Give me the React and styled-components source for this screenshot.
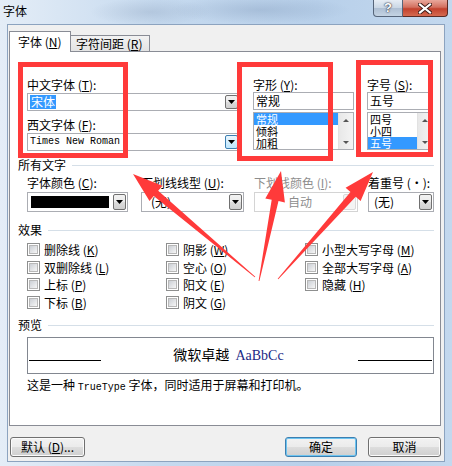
import React from 'react';
import styled, { createGlobalStyle } from 'styled-components';

const GlobalStyle = createGlobalStyle`
  html, body { margin: 0; padding: 0; background: #fff; }
  body {
    font-family: "Noto Sans CJK SC", "Liberation Sans", sans-serif;
    font-size: 12px;
    color: #000;
  }
`;

const RED = '#ff3a3a';

// annotation arrows: tail -> tip
const arrows = [
  { tail: [255, 277], tip: [133, 174] },
  { tail: [259, 281], tip: [281, 171] },
  { tail: [278, 279], tip: [373, 172] },
];

const arrowPoints = ({ tail, tip }) => {
  const dx = tip[0] - tail[0];
  const dy = tip[1] - tail[1];
  const len = Math.hypot(dx, dy);
  const ux = dx / len, uy = dy / len;
  const nx = -uy, ny = ux;
  const head = 30, headHalf = 10, neckHalf = 3.5, tailHalf = 0.4;
  const neck = [tip[0] - ux * head, tip[1] - uy * head];
  const p = (b, w) => `${(b[0] + nx * w).toFixed(1)},${(b[1] + ny * w).toFixed(1)}`;
  return [
    p(tail, tailHalf), p(neck, neckHalf), p(neck, headHalf),
    `${tip[0]},${tip[1]}`,
    p(neck, -headHalf), p(neck, -neckHalf), p(tail, -tailHalf),
  ].join(' ');
};

const App = () => (
  <>
    <GlobalStyle />
    <Window>
      <TitleBar>
        <Title>字体</Title>
        <Caption>
          <HelpButton>?</HelpButton>
          <CloseButton>
            <svg width="14" height="11" viewBox="0 0 14 11">
              <path d="M2 1.5 L12 9.5 M12 1.5 L2 9.5" stroke="#3a1a16" strokeWidth="4" strokeLinecap="square" />
              <path d="M2 1.5 L12 9.5 M12 1.5 L2 9.5" stroke="#fff" strokeWidth="2.2" strokeLinecap="square" />
            </svg>
          </CloseButton>
        </Caption>
      </TitleBar>

      <Client>
        <Tabs>
          <Tab $active>字体 (<u>N</u>)</Tab>
          <Tab>字符间距 (<u>R</u>)</Tab>
        </Tabs>

        <Panel>
          <FontGrid>
            <Column>
              <Label>中文字体 (<u>T</u>):</Label>
              <Combo $top={1}>
                <ComboText><Selected>宋体</Selected></ComboText>
                <DropButton $inset><DownTriangle /></DropButton>
              </Combo>
              <Label $top={7}>西文字体 (<u>F</u>):</Label>
              <Combo $top={1}>
                <ComboText><Mono>Times New Roman</Mono></ComboText>
                <DropButton $inset $hot><DownTriangle /></DropButton>
              </Combo>
            </Column>

            <Column>
              <Label>字形 (<u>Y</u>):</Label>
              <TextBox>常规</TextBox>
              <ListBox>
                <ListItems>
                  <ListItem $selected>常规</ListItem>
                  <ListItem>倾斜</ListItem>
                  <ListItem>加粗</ListItem>
                </ListItems>
                <ScrollBar>
                  <ScrollArrow $up />
                  <ScrollArrow />
                </ScrollBar>
              </ListBox>
            </Column>

            <Column>
              <Label>字号 (<u>S</u>):</Label>
              <TextBox>五号</TextBox>
              <ListBox>
                <ListItems>
                  <ListItem>四号</ListItem>
                  <ListItem>小四</ListItem>
                  <ListItem $selected>五号</ListItem>
                </ListItems>
                <ScrollBar>
                  <ScrollArrow $up />
                  <ScrollArrow />
                </ScrollBar>
              </ListBox>
            </Column>
          </FontGrid>

          <SectionHeader $top={7}><span>所有文字</span><Rule /></SectionHeader>

          <FieldGrid>
            <Column>
              <Label>字体颜色 (<u>C</u>):</Label>
              <Combo $top={2} $width={101} $height={20}>
                <ColorSwatch />
                <DropButton><DownTriangle /></DropButton>
              </Combo>
            </Column>
            <Column>
              <Label>下划线线型 (<u>U</u>):</Label>
              <Combo $top={2} $width={103} $height={20}>
                <ComboText $pad={8}>(无)</ComboText>
                <DropButton $inset><DownTriangle /></DropButton>
              </Combo>
            </Column>
            <Column>
              <Label $disabled>下划线颜色 (<u>I</u>):</Label>
              <Combo $top={2} $width={104} $height={20} $disabled>
                <ComboText $center $disabled>自动</ComboText>
                <DropButton $inset $disabled />
              </Combo>
            </Column>
            <Column>
              <Label>着重号 (·):</Label>
              <Combo $top={2} $width={66} $height={20}>
                <ComboText $pad={4}>(无)</ComboText>
                <DropButton $inset><DownTriangle /></DropButton>
              </Combo>
            </Column>
          </FieldGrid>

          <SectionHeader $top={11}><span>效果</span><Rule /></SectionHeader>

          <CheckGrid>
            <Check>删除线 (<u>K</u>)</Check>
            <Check>阴影 (<u>W</u>)</Check>
            <Check>小型大写字母 (<u>M</u>)</Check>
            <Check>双删除线 (<u>L</u>)</Check>
            <Check>空心 (<u>O</u>)</Check>
            <Check>全部大写字母 (<u>A</u>)</Check>
            <Check>上标 (<u>P</u>)</Check>
            <Check>阳文 (<u>E</u>)</Check>
            <Check>隐藏 (<u>H</u>)</Check>
            <Check>下标 (<u>B</u>)</Check>
            <Check>阴文 (<u>G</u>)</Check>
          </CheckGrid>

          <SectionHeader $top={7}><span>预览</span><Rule /></SectionHeader>

          <Preview>
            <PreviewLine />
            <PreviewText>微软卓越 <Sample>AaBbCc</Sample></PreviewText>
            <PreviewLine />
          </Preview>

          <Description>
            这是一种 <Mono>TrueType</Mono> 字体，同时适用于屏幕和打印机。
          </Description>
        </Panel>

        <ButtonRow>
          <Button $width={75}>默认 (<u>D</u>)...</Button>
          <Spacer />
          <Button $width={72} $default>确定</Button>
          <Button $width={73}>取消</Button>
        </ButtonRow>
      </Client>

      <Annotations width="452" height="466" viewBox="0 0 452 466">
        <rect x="20.5" y="64.5" width="105" height="91" fill="none" stroke={RED} strokeWidth="5" />
        <rect x="239.5" y="64.5" width="91" height="94" fill="none" stroke={RED} strokeWidth="5" />
        <rect x="358.5" y="62.5" width="72" height="92" fill="none" stroke={RED} strokeWidth="5" />
        {arrows.map((a, i) => (
          <polygon key={i} points={arrowPoints(a)} fill={RED} />
        ))}
      </Annotations>
    </Window>
  </>
);

const DownTriangle = () => (
  <svg width="7" height="4" viewBox="0 0 7 4">
    <polygon points="0,0 7,0 3.5,4" fill="#000" />
  </svg>
);

const Check = ({ children }) => (
  <CheckRow>
    <CheckBox />
    <span>{children}</span>
  </CheckRow>
);

export default App;

const Window = styled.div`
  position: relative;
  width: 452px;
  height: 466px;
  display: flex;
  flex-direction: column;
  overflow: hidden;
  background:
    radial-gradient(ellipse 60px 14px at 150px 12px, rgba(120, 140, 170, 0.25), transparent),
    radial-gradient(ellipse 90px 14px at 260px 10px, rgba(110, 135, 170, 0.28), transparent),
    linear-gradient(90deg, #e4edf7 0%, #c6daef 35%, #b8d0ea 70%, #c3d8ee 100%);
`;

const TitleBar = styled.div`
  height: 24px;
  display: flex;
  justify-content: space-between;
  align-items: flex-start;
  padding-left: 3px;
  flex-shrink: 0;
`;

const Title = styled.div`
  line-height: 22px;
  font-size: 12px;
  color: #000;
`;

const Caption = styled.div`
  display: flex;
  margin-right: 4px;
`;

const HelpButton = styled.div`
  width: 28px;
  height: 16px;
  border: 1px solid #56657a;
  border-top: none;
  border-radius: 0 0 0 4px;
  background: linear-gradient(#e6edf5 0%, #c9d6e4 50%, #aebfd3 51%, #c4d3e3 100%);
  color: #fff;
  font: bold 13px "Liberation Sans", sans-serif;
  line-height: 15px;
  text-align: center;
  text-shadow: 0 0 2px #223, 0 0 1px #223;
`;

const CloseButton = styled.div`
  width: 44px;
  height: 16px;
  border: 1px solid #5a2a24;
  border-top: none;
  border-left: none;
  border-radius: 0 0 4px 0;
  background: linear-gradient(#e9a89c 0%, #d3705f 45%, #c2412d 55%, #d56a50 100%);
  display: flex;
  align-items: center;
  justify-content: center;
`;

const Client = styled.div`
  flex: 1;
  margin: 0 7px 4px 7px;
  border: 1px solid #8ca3bf;
  background: #f0f0f0;
  padding: 7px 3px 4px 1px;
  display: flex;
  flex-direction: column;
`;

const Tabs = styled.div`
  display: flex;
  align-items: flex-end;
  height: 20px;
  margin-bottom: -1px;
  position: relative;
  z-index: 1;
`;

const Tab = styled.div`
  box-sizing: border-box;
  height: ${({ $active }) => ($active ? 21 : 17)}px;
  width: ${({ $active }) => ($active ? 62 : 79)}px;
  border: 1px solid #898c95;
  border-bottom: ${({ $active }) => ($active ? 'none' : '1px solid #898c95')};
  border-left: ${({ $active }) => ($active ? '1px solid #898c95' : 'none')};
  background: ${({ $active }) => ($active ? '#fff' : 'linear-gradient(#f2f2f2, #e3e3e3)')};
  padding-left: ${({ $active }) => ($active ? 8 : 5)}px;
  line-height: ${({ $active }) => ($active ? 19 : 15)}px;
  white-space: nowrap;
  u { text-decoration: underline; }
`;

const Panel = styled.div`
  box-sizing: border-box;
  height: 375px;
  border: 1px solid #898c95;
  background: #fff;
  padding: 26px 6px 0 8px;
  display: flex;
  flex-direction: column;
`;

const FontGrid = styled.div`
  margin-left: 9px;
  display: grid;
  grid-template-columns: 213px 101px 66px;
  column-gap: 13px;
  height: 73px;
`;

const Column = styled.div`
  display: flex;
  flex-direction: column;
`;

const Label = styled.div`
  line-height: 14px;
  height: 14px;
  margin-top: ${({ $top }) => $top || 0}px;
  color: ${({ $disabled }) => ($disabled ? '#8d8d8d' : '#000')};
  white-space: nowrap;
`;

const Combo = styled.div`
  box-sizing: border-box;
  display: flex;
  align-items: stretch;
  margin-top: ${({ $top }) => $top || 0}px;
  width: ${({ $width }) => ($width ? `${$width}px` : '100%')};
  height: ${({ $height }) => $height || 18}px;
  border: 1px solid ${({ $disabled }) => ($disabled ? '#d4d4d4' : '#abadb3')};
  background: #fff;
  padding: 1px;
`;

const ComboText = styled.div`
  flex: 1;
  display: flex;
  align-items: center;
  padding-left: ${({ $pad }) => $pad ?? 1}px;
  justify-content: ${({ $center }) => ($center ? 'center' : 'flex-start')};
  color: ${({ $disabled }) => ($disabled ? '#8d8d8d' : '#000')};
  white-space: nowrap;
  line-height: 14px;
`;

const Selected = styled.span`
  background: #3399ff;
  color: #fff;
  padding: 0 1px;
  line-height: 14px;
`;

const Mono = styled.span`
  font-family: "Liberation Mono", "DejaVu Sans Mono", monospace;
  font-size: 10px;
`;

const DropButton = styled.div`
  box-sizing: border-box;
  width: 13px;
  display: flex;
  align-items: center;
  justify-content: center;
  border: 1px solid ${({ $hot, $disabled }) => ($hot ? '#3c7fb1' : $disabled ? '#dadada' : '#707070')};
  border-radius: 2px;
  background: ${({ $hot, $disabled }) =>
    $hot
      ? 'linear-gradient(#eaf6fd, #bee6fd)'
      : $disabled
        ? '#f4f4f4'
        : 'linear-gradient(#f2f2f2 0%, #ebebeb 50%, #dddddd 51%, #cfcfcf 100%)'};
`;

const ColorSwatch = styled.div`
  flex: 1;
  margin: 2px 4px 2px 2px;
  background: #000;
`;

const TextBox = styled.div`
  box-sizing: border-box;
  height: 18px;
  border: 1px solid #abadb3;
  padding-left: 2px;
  line-height: 16px;
`;

const ListBox = styled.div`
  box-sizing: border-box;
  margin-top: 2px;
  height: 38px;
  border: 1px solid #abadb3;
  display: flex;
`;

const ListItems = styled.div`
  flex: 1;
  display: flex;
  flex-direction: column;
`;

const ListItem = styled.div`
  height: 12px;
  line-height: 12px;
  font-size: 11px;
  padding-left: 2px;
  background: ${({ $selected }) => ($selected ? '#3399ff' : 'transparent')};
  color: ${({ $selected }) => ($selected ? '#fff' : '#000')};
`;

const ScrollBar = styled.div`
  width: 15px;
  background: linear-gradient(90deg, #e8e8e8, #f4f4f4);
  border-left: 1px solid #e2e2e2;
  display: flex;
  flex-direction: column;
  justify-content: space-between;
  align-items: center;
  padding: 6px 0 5px;
  box-sizing: border-box;
`;

const ScrollArrow = styled.div`
  width: 0;
  height: 0;
  border-left: 3px solid transparent;
  border-right: 3px solid transparent;
  ${({ $up }) => ($up ? 'border-bottom: 3px solid #555;' : 'border-top: 3px solid #555;')}
`;

const SectionHeader = styled.div`
  display: flex;
  align-items: center;
  gap: 6px;
  height: 14px;
  line-height: 14px;
  margin-top: ${({ $top }) => $top}px;
  white-space: nowrap;
`;

const Rule = styled.div`
  flex: 1;
  height: 1px;
  background: #d5dfe8;
`;

const FieldGrid = styled.div`
  margin-left: 9px;
  margin-top: 4px;
  display: grid;
  grid-template-columns: 114px 113px 114px 66px;
`;

const CheckGrid = styled.div`
  margin-left: 9px;
  margin-top: 4px;
  display: grid;
  grid-template-columns: repeat(3, 139px);
  grid-auto-rows: 17.5px;
`;

const CheckRow = styled.div`
  display: flex;
  align-items: center;
  gap: 4px;
  white-space: nowrap;
`;

const CheckBox = styled.div`
  box-sizing: border-box;
  width: 13px;
  height: 13px;
  border: 1px solid #8e8f8f;
  background: #fff;
  padding: 1px;
  &::after {
    content: '';
    display: block;
    width: 100%;
    height: 100%;
    background: linear-gradient(135deg, #cbcfd5, #f6f6f6);
    border: 1px solid #b8b8b8;
    box-sizing: border-box;
  }
`;

const Preview = styled.div`
  box-sizing: border-box;
  margin: 5px 0 0 9px;
  height: 37px;
  border: 1px solid #828790;
  display: grid;
  grid-template-columns: 72px 1fr 74px;
  align-items: end;
  padding: 0 1px 12px;
`;

const PreviewLine = styled.div`
  height: 1px;
  background: #000;
`;

const PreviewText = styled.div`
  text-align: center;
  font-size: 14px;
  line-height: 16px;
  margin-bottom: -3px;
  padding-right: 2px;
`;

const Sample = styled.span`
  font-family: "Liberation Serif", serif;
  font-size: 14px;
  color: #1b2a86;
  margin-left: 3px;
`;

const Description = styled.div`
  margin: 4px 0 0 9px;
  line-height: 14px;
  white-space: nowrap;
`;

const ButtonRow = styled.div`
  display: flex;
  gap: 11px;
  margin-top: 11px;
  padding-left: 1px;
  height: 20px;
`;

const Spacer = styled.div`
  flex: 1;
`;

const Button = styled.div`
  box-sizing: border-box;
  width: ${({ $width }) => $width}px;
  height: 20px;
  border: 1px solid ${({ $default }) => ($default ? '#3c7fb1' : '#707070')};
  border-radius: 3px;
  background: linear-gradient(#f2f2f2 0%, #ebebeb 50%, #dddddd 51%, #cfcfcf 100%);
  box-shadow: inset 0 0 0 1px ${({ $default }) => ($default ? '#6dc4f0' : '#fbfbfb')};
  display: flex;
  align-items: center;
  justify-content: center;
  white-space: nowrap;
  line-height: 14px;
`;

const Annotations = styled.svg`
  position: absolute;
  top: 0;
  left: 0;
  pointer-events: none;
`;
